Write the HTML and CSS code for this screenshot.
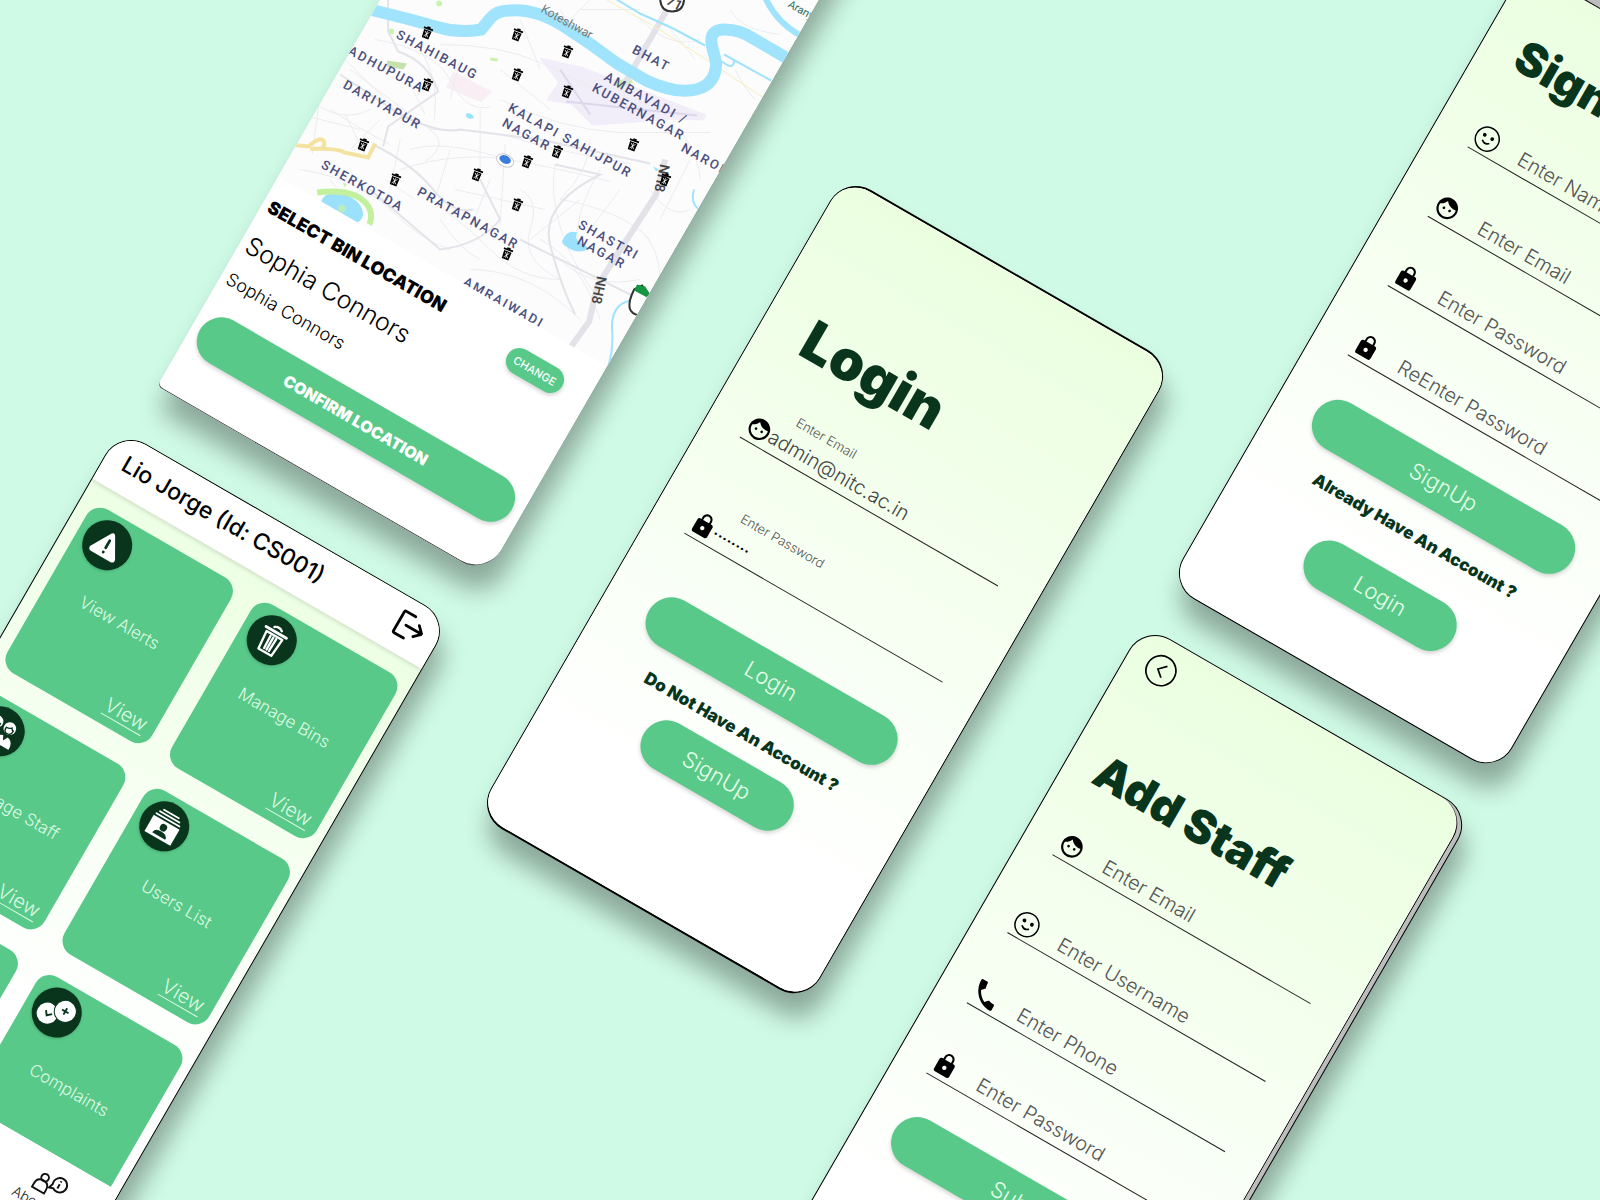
FILE: index.html
```html
<!DOCTYPE html>
<html lang="en">
<head>
<meta charset="utf-8">
<meta name="viewport" content="width=device-width, initial-scale=1">
<title>Waste collection app screens</title>
<link rel="stylesheet" href="styles.css">
</head>
<body>
<svg class="sprite" aria-hidden="true">
  <symbol id="i-face" viewBox="0 0 24 24"><path d="M9 11.75c-.69 0-1.25.56-1.25 1.25s.56 1.25 1.25 1.25 1.25-.56 1.25-1.25-.56-1.25-1.25-1.25zm6 0c-.69 0-1.25.56-1.25 1.25s.56 1.25 1.25 1.25 1.25-.56 1.25-1.25-.56-1.25-1.25-1.25zM12 2C6.48 2 2 6.48 2 12s4.48 10 10 10 10-4.48 10-10S17.52 2 12 2zm0 18c-4.41 0-8-3.59-8-8 0-.29.02-.58.05-.86 2.36-1.05 4.23-2.98 5.21-5.37C11.07 8.33 14.05 10 17.42 10c.78 0 1.53-.09 2.25-.26.21.71.33 1.47.33 2.26 0 4.41-3.59 8-8 8z"/></symbol>
  <symbol id="i-lock" viewBox="0 0 24 24"><path d="M18 8h-1V6c0-2.76-2.24-5-5-5S7 3.24 7 6v2H6c-1.1 0-2 .9-2 2v10c0 1.1.9 2 2 2h12c1.1 0 2-.9 2-2V10c0-1.1-.9-2-2-2zm-6 9c-1.1 0-2-.9-2-2s.9-2 2-2 2 .9 2 2-.9 2-2 2zm3.1-9H8.9V6c0-1.71 1.39-3.1 3.1-3.1 1.71 0 3.1 1.39 3.1 3.1v2z"/></symbol>
  <symbol id="i-smile" viewBox="0 0 26 26"><circle cx="13" cy="13" r="12" fill="none" stroke="#000" stroke-width="1.5"/><circle cx="8.700" cy="10.500" r="1.900"/><circle cx="17.300" cy="10.500" r="1.900"/><path d="M9.500 16.300q3.500 3 7 0" fill="none" stroke="#000" stroke-width="1.700" stroke-linecap="round"/></symbol>
  <symbol id="i-phone" viewBox="0 0 24 24"><path d="M6.620 10.790c1.440 2.830 3.760 5.140 6.590 6.590l2.200-2.200c.27-.27.67-.36 1.020-.24 1.120.37 2.330.57 3.570.57.55 0 1 .45 1 1V20c0 .55-.45 1-1 1-9.390 0-17-7.610-17-17 0-.55.45-1 1-1h3.500c.55 0 1 .45 1 1 0 1.250.2 2.450.57 3.570.11.35.03.74-.25 1.020l-2.200 2.200z"/></symbol>
  <symbol id="i-back" viewBox="0 0 32 32"><g fill="none" stroke="#000" stroke-width="1.700"><circle cx="16" cy="16" r="15"/><path d="M19.500 9 12.500 16l7 6"/></g></symbol>
  <symbol id="i-logout" viewBox="0 0 28 28"><g fill="none" stroke="#000" stroke-width="2.600" stroke-linecap="round" stroke-linejoin="round"><path d="M14 2.500H4q-1.500 0-1.500 1.500v20q0 1.500 1.500 1.500h10"/><path d="M10 14h16M21 8l6 6-6 6"/></g></symbol>
  <symbol id="i-warn" viewBox="0 0 32 32"><path fill="#fff" d="M13.500 4.500q2.500-4 5 0l11.500 20q1.500 4-2.500 4.500h-23q-4-.5-2.500-4.500z"/><path stroke="#08351c" stroke-width="2.800" stroke-linecap="round" d="M16 11v8M16 23.800v.2"/></symbol>
  <symbol id="i-trash" viewBox="0 0 32 32"><g fill="none" stroke="#fff" stroke-width="2.200" stroke-linecap="round" stroke-linejoin="round"><path d="M5 7.500h22" stroke-width="2.800"/><path d="M12 4q4-3 8 0"/><path d="M7.500 11 9 29h14l1.500-18z"/><path d="M13 13l.5 13M16.100 13v13M19.200 13l-.5 13"/></g></symbol>
  <symbol id="i-people" viewBox="0 0 32 32"><g fill="#fff"><circle cx="9" cy="9" r="6"/><path d="M0 27q0-10 9-10 5 0 7 4 2-4 7-4 9 0 9 10z"/><circle cx="23" cy="9" r="6"/></g><path fill="none" stroke="#08351c" stroke-width="1.300" d="M5.500 9.500q3.500 0 5-2 1 2 2.500 2 0 5-4 5t-3.500-5zM19.500 9.500q3.500 0 5-2 1 2 2.500 2 0 5-4 5t-3.500-5z"/><path fill="#08351c" d="m6 16 3 6 3-6zM20 16l3 6 3-6z"/></symbol>
  <symbol id="i-users" viewBox="0 0 32 32"><path stroke="#fff" stroke-width="1.700" stroke-linecap="round" d="M8 2.500h16M5.500 5.700h21M3.500 9h25"/><path fill="#fff" d="M2 11.500h28v17.500h-28z"/><g fill="#08351c"><circle cx="16" cy="17.500" r="3.500"/><path d="M9 26.500q0-5 7-5t7 5z"/></g></symbol>
  <symbol id="i-complaint" viewBox="0 0 36 36"><circle cx="10.500" cy="23" r="10" fill="#fff"/><circle cx="24.500" cy="13" r="10.500" fill="#fff" stroke="#08351c"/><path fill="none" stroke="#08351c" stroke-width="1.800" d="m8 21 3 4 4-3.500M24.500 9.500v7M21 13h7"/></symbol>
  <symbol id="i-about" viewBox="0 0 32 24"><g fill="none" stroke="#111" stroke-width="1.800"><path d="M1.500 22.500v-4q0-6.500 6.500-6.500t6.500 6.500v4z"/><circle cx="8" cy="9" r="3.600"/><path d="M17.200 10.500a6.800 6.800 0 1 1 2.500 3.300l-4 1.400zM23 7.500v4.500M23 4.200v1.300"/></g></symbol>
  <symbol id="i-bin" viewBox="0 0 16 18"><g transform="rotate(20 8 9)"><path d="M2.500 3.500h3.500V2h4v1.500h3.500v2h-11zM3.500 6.500h9l-.5 9.500h-8z"/><path fill="none" stroke="#fff" stroke-width=".8" d="M5.500 8l5 6M10.500 8l-5 6M8 7.500v7"/></g></symbol>
</svg>

<main class="board">

  <section class="phone phone--map">
    <svg class="map" viewBox="1 0 380 496" role="img" aria-label="Map of bin locations">
      <rect width="382" height="496" fill="#fcfcfc"/>
      <g transform="rotate(-30) translate(-525 253)">
        <path class="airport" d="M539 58 581 67 706 115 704 121 671 120 624 124 592 126 571 105 546 101 558 83z"/>
        <path fill="#f9eef3" d="M453 72 492 92 481 103 446 88z"/>
        <path fill="#c5e2ab" d="m387 61 20 3-4 6-16-3z"/>
        <g fill="#c9f3b0"><circle cx="391" cy="32" r="3"/><circle cx="439" cy="4" r="3"/><path d="m490 58 8 1-1 3-7-1zM614 82l16-4 3 5-15 6zM343 183l4 2-3 3z"/></g>
        <g class="lanes">
          <path d="M375 40q60 10 76 42t40 25M350 70q60 45 80 60t-5 32M420 50q20 30 14 70M440 45q60 0 100 18t60 30M430 130q60 0 90 10t110 24M400 170q60-20 120-8t90 20M410 150q30-10 90 8M330 110q30 20 60 35M310 100q30 25 60 10M300 170q60 10 90 40t60 40M440 220q20 30 40 40M430 200q30 20 60 50t70 30M520 190q20 10 10 40t30 50M555 165q-10 60 40 130M480 110v60M500 100q60 30 120 33h90M600 170q-30 50-20 80M560 200q60 10 90 40M650 190q20 30 40 20M640 230q20 20 20 50M540 240q40 20 60 80M470 270q60 0 110 50M330 180q20 30 30 10M560 260q30 30 80 20M670 30q10 10 25 30M640 20q30 30 60 20M560 10q10 20 20 20M580 10h60M730 10q10 20 50 25M735 70q10 20 20 30M680 130q20 30 20 50M590 140q0 30-30 60"/>
          <path d="M300 115 360 130M320 95l-8 60M345 115l20 40M380 120l-30 30M385 180l30 20M360 190l30 15M400 140l-10 50M450 150l-15 50M455 190l90 20M470 230l20-50M500 225l5-80M580 200l-50 40M620 190l-30 40M690 160l-30 60M500 70l50 40M520 20l20 50M590 0l-20 20M460 60l-10 40M405 75l20 40M345 60l50 50"/>
        </g>
        <g class="roads">
          <path d="M388 0v32l10 20q30 10 40 40l-50 35-5 20"/>
          <path d="M340 75l60 40q40 20 60 15l80 10 110 24"/>
          <path d="M373 145q40 20 60 45t40 20M370 190l70 60q40-5 60-30l-20-40"/>
          <path d="M555 165l45 10q-60 30-50 70t25 70M520 240l120 60"/>
        </g>
        <path class="highway" d="M667 10 624 85M665 160l-9 35-39 60-20 32-8 35-18 25"/>
        <path class="yellow thin" d="M606 0l50 28 50 32 60 40"/>
        <path class="yellow" d="M290 145l18 2q14-12 16-4t-14 6q30 0 34 4l24 5 7-14"/>
        <path class="river" d="M366 9 410 20l29 8q20 6 42 2l9-11q6-8 20-8 26-2 54 16t53 37l29 17q30 14 50 9t20-27l-4-16q-4-17 12-17t29 9l36 21"/>
        <path class="river river--mid" d="M762-10q10 30 38 46"/>
        <path class="river river--thin" d="M600-10l40 24 33 15 32 17M724 55l47 26M722 62q12 10 12-2M694 190q-5 15 8 22M640 300q-30 0-28 30t-10 50"/>
        <ellipse cx="342" cy="209" rx="22" ry="14" transform="rotate(24 342 209)" fill="#9be1fb"/>
        <path fill="none" stroke="#c3f09c" stroke-width="6" d="M317 193q40-5 52 15 4 10 0 17"/>
        <circle cx="342" cy="209" r="4" fill="#b6ecc0"/>
        <path fill="#9be1fb" d="M563 240q4-10 14-7-3 8 4 10l8 6q-10 6-20 0t-6-9zM466 114q5-1 8 4-5 3-8-1zM653 167l6 3-3 2z"/>
        <g fill="none" stroke="#dcd8ea" stroke-width="2"><path d="M566 102l131 14M560 70l30 45"/></g>

        <g class="place">
          <text transform="translate(395 38) rotate(28)">SHAHIBAUG</text>
          <text transform="translate(347 54) rotate(28)">ADHUPURA</text>
          <text transform="translate(342 88) rotate(29)">DARIYAPUR</text>
          <text transform="translate(320 168) rotate(29)">SHERKOTDA</text>
          <text transform="translate(416 195) rotate(29)">PRATAPNAGAR</text>
          <text transform="translate(507 111) rotate(29)">KALAPI SAHIJPUR</text>
          <text transform="translate(501 126) rotate(29)">NAGAR</text>
          <text transform="translate(603 80) rotate(29)">AMBAVADI /</text>
          <text transform="translate(591 91) rotate(29)">KUBERNAGAR</text>
          <text transform="translate(631 53) rotate(28)">BHAT</text>
          <text transform="translate(680 151) rotate(29)">NARODA</text>
          <text transform="translate(577 228) rotate(29)">SHASTRI</text>
          <text transform="translate(576 244) rotate(29)">NAGAR</text>
          <text transform="translate(462 285) rotate(29)">AMRAIWADI</text>
        </g>
        <text class="road-name" transform="translate(660 164) rotate(102)">NH8</text>
        <text class="road-name" transform="translate(597 276) rotate(102)">NH8</text>
        <text class="river-name" transform="translate(540 12) rotate(29)">Koteshwar</text>
        <text class="park-name" transform="translate(787 7) rotate(29)">Aranya</text>

        <g fill="#fff" stroke="#333" stroke-width="2"><path d="M660-2q0 14 12 14t12-14z"/><path d="M634 290l8-4 8 10q-2 25-10 20-18-2-6-26z"/></g>
        <path fill="#14953f" d="M634 291l3-6 8 2 5 8-3 3z"/>
        <text class="road-name" transform="translate(665 4) rotate(28)">71</text>

        <ellipse cx="505" cy="161" rx="9" ry="6" transform="rotate(25 505 161)" class="locator"/>
        <ellipse cx="505" cy="160" rx="6" ry="4" transform="rotate(25 505 160)" fill="#3b7ddd"/>

        <g>
          <use href="#i-bin" x="420" y="25" width="14" height="16"/>
          <use href="#i-bin" x="510" y="27" width="14" height="16"/>
          <use href="#i-bin" x="560" y="44" width="14" height="16"/>
          <use href="#i-bin" x="510" y="67" width="14" height="16"/>
          <use href="#i-bin" x="560" y="84" width="14" height="16"/>
          <use href="#i-bin" x="420" y="77" width="14" height="16"/>
          <use href="#i-bin" x="356" y="137" width="14" height="16"/>
          <use href="#i-bin" x="388" y="172" width="14" height="16"/>
          <use href="#i-bin" x="470" y="167" width="14" height="16"/>
          <use href="#i-bin" x="520" y="154" width="14" height="16"/>
          <use href="#i-bin" x="550" y="144" width="14" height="16"/>
          <use href="#i-bin" x="626" y="137" width="14" height="16"/>
          <use href="#i-bin" x="658" y="172" width="14" height="16"/>
          <use href="#i-bin" x="510" y="197" width="14" height="16"/>
          <use href="#i-bin" x="500" y="246" width="14" height="16"/>
        </g>
      </g>
    </svg>
    <div class="pick">
      <div class="pick-info">
        <div>
          <h2 class="pick-title">SELECT BIN LOCATION</h2>
          <p class="pick-name">Sophia Connors</p>
          <p class="pick-sub">Sophia Connors</p>
        </div>
        <button class="btn btn--small" type="button">CHANGE</button>
      </div>
      <button class="btn btn--confirm" type="button">CONFIRM LOCATION</button>
    </div>
  </section>

  <section class="phone phone--dash">
    <header class="topbar">
      <h2 class="topbar-title">Lio Jorge (Id: CS001)</h2>
      <button class="icon-btn" type="button" aria-label="Log out"><svg width="30" height="30"><use href="#i-logout"/></svg></button>
    </header>
    <div class="cards">
      <article class="card"><span class="badge"><svg width="32" height="32"><use href="#i-warn"/></svg></span><h3>View Alerts</h3><a href="#alerts">View</a></article>
      <article class="card"><span class="badge"><svg width="34" height="34"><use href="#i-trash"/></svg></span><h3>Manage Bins</h3><a href="#bins">View</a></article>
      <article class="card"><span class="badge"><svg width="34" height="34"><use href="#i-people"/></svg></span><h3>Manage Staff</h3><a href="#staff">View</a></article>
      <article class="card"><span class="badge"><svg width="34" height="34"><use href="#i-users"/></svg></span><h3>Users List</h3><a href="#users">View</a></article>
      <article class="card"></article>
      <article class="card"><span class="badge"><svg width="38" height="38"><use href="#i-complaint"/></svg></span><h3>Complaints</h3><a href="#complaints">View</a></article>
    </div>
    <nav class="tabs">
      <a class="tab" href="#about"><svg width="34" height="26"><use href="#i-about"/></svg>About Us</a>
    </nav>
  </section>

  <section class="phone phone--login">
    <form class="form form--login">
      <h1 class="title title--large">Login</h1>
      <div class="field field--labelled">
        <label for="login-email">Enter Email</label>
        <svg width="26" height="26"><use href="#i-face"/></svg>
        <input id="login-email" type="email" value="admin@nitc.ac.in">
      </div>
      <div class="field field--labelled">
        <label for="login-pass">Enter Password</label>
        <svg width="26" height="26"><use href="#i-lock"/></svg>
        <input id="login-pass" type="password" value="password">
      </div>
      <button class="btn btn--wide" type="button">Login</button>
      <p class="hint">Do Not Have An Account ?</p>
      <button class="btn btn--half" type="button">SignUp</button>
    </form>
  </section>

  <section class="phone phone--signup">
    <form class="form form--signup">
      <h1 class="title">SignUp</h1>
      <div class="field"><svg width="26" height="26"><use href="#i-smile"/></svg><input type="text" placeholder="Enter Name" aria-label="Enter Name"></div>
      <div class="field"><svg width="26" height="26"><use href="#i-face"/></svg><input type="email" placeholder="Enter Email" aria-label="Enter Email"></div>
      <div class="field"><svg width="26" height="26"><use href="#i-lock"/></svg><input type="password" placeholder="Enter Password" aria-label="Enter Password"></div>
      <div class="field"><svg width="26" height="26"><use href="#i-lock"/></svg><input type="password" placeholder="ReEnter Password" aria-label="ReEnter Password"></div>
      <button class="btn btn--wide" type="button">SignUp</button>
      <p class="hint">Already Have An Account ?</p>
      <button class="btn btn--half" type="button">Login</button>
    </form>
  </section>

  <section class="phone phone--staff">
    <form class="form form--staff">
      <button class="icon-btn" type="button" aria-label="Back"><svg width="32" height="32"><use href="#i-back"/></svg></button>
      <h1 class="title">Add Staff</h1>
      <div class="field"><svg width="26" height="26"><use href="#i-face"/></svg><input type="email" placeholder="Enter Email" aria-label="Enter Email"></div>
      <div class="field"><svg width="26" height="26"><use href="#i-smile"/></svg><input type="text" placeholder="Enter Username" aria-label="Enter Username"></div>
      <div class="field"><svg class="handset" width="32" height="32"><use href="#i-phone"/></svg><input type="tel" placeholder="Enter Phone" aria-label="Enter Phone"></div>
      <div class="field"><svg width="26" height="26"><use href="#i-lock"/></svg><input type="password" placeholder="Enter Password" aria-label="Enter Password"></div>
      <button class="btn btn--wide" type="button">Submit</button>
    </form>
  </section>

</main>
</body>
</html>
```
FILE: styles.css
```css
:root {
  --mint: #cffae5;
  --green: #58c988;
  --dark: #08351c;
  --line: #222;
}

* { box-sizing: border-box; }

body {
  margin: 0;
  background: var(--mint);
  color: #000;
  font-family: Inter, "Liberation Sans", sans-serif;
}

h1, h2, h3, p { margin: 0; }
button, input { font: inherit; color: inherit; }
svg { display: block; flex: none; }
.sprite { position: absolute; width: 0; height: 0; }

/* Free canvas that carries the tilted screens */
.board {
  position: relative;
  min-height: 100vh;
  overflow: hidden;
}

.phone {
  position: absolute;
  display: flex;
  flex-direction: column;
  width: 380px;
  min-height: 738px;
  overflow: hidden;
  border: 1px solid #000;
  border-radius: 30px;
  background: #fff;
  box-shadow: 14px 20px 24px rgba(0, 0, 0, .32);
  transform: rotate(30deg);
  transform-origin: 0 0;
}
.phone--map { left: 526px; top: -253px; border-color: transparent transparent #444; border-width: 0 0 1px; border-radius: 30px 30px 30px 6px; }
.phone--dash { left: 120px; top: 429px; width: 382px; height: 738px; background: linear-gradient(#ebffe1, #fff 75%); }
.phone--login { left: 845px; top: 175px; border-width: 2px 1px; }
.phone--signup { left: 1537px; top: -55px; padding-top: 22px; background: #bdbdbd; }
.phone--staff { left: 1144px; top: 624px; padding-right: 4px; background: #bdbdbd; }

/* Buttons */
.btn {
  height: 52px;
  padding: 0;
  border: 0;
  border-radius: 26px;
  background: var(--green);
  color: #e6ffe9;
  font-size: 22px;
  font-weight: 300;
  box-shadow: 1px 2px 4px rgba(0, 0, 0, .18);
}
.btn--half { width: 169px; }
.btn--small { height: 27px; width: 63px; font-size: 11px; font-weight: 500; color: #fff; }
.btn--confirm { height: 49px; font-size: 16px; font-weight: 900; color: #fff; }
.icon-btn { padding: 0; border: 0; background: none; }

/* Forms */
.form {
  flex: 1;
  display: flex;
  flex-direction: column;
  align-items: center;
  background: linear-gradient(#ebffe0, #fff 85%);
}
.title {
  align-self: flex-start;
  color: var(--dark);
  font-size: 46px;
  font-weight: 900;
  line-height: 52px;
}
.title--large { font-size: 56px; line-height: 60px; }
.field {
  align-self: stretch;
  display: flex;
  align-items: center;
  gap: 24px;
  border-bottom: 1px solid var(--line);
}
.field input {
  flex: 1;
  min-width: 0;
  height: 32px;
  padding: 0;
  border: 0;
  outline: 0;
  background: none;
  color: #444;
  font-size: 20px;
  font-weight: 300;
}
.field input::placeholder { color: #555; opacity: 1; }
.field .handset { margin: 0 -3px; }

.field--labelled {
  display: grid;
  grid-template-columns: 25px 1fr;
  gap: 0;
}
.field--labelled label {
  grid-column: 1 / -1;
  padding-left: 42px;
  color: #555;
  font-size: 13px;
  font-weight: 300;
  line-height: 20px;
}
.field--labelled input[type="password"] { font-size: 9px; color: #000; }

.hint {
  color: var(--dark);
  font-size: 17px;
  font-weight: 900;
  line-height: 20px;
}

.form--login { padding: 127px 41px 0 39px; }
.form--login .title { margin: 0 0 38px 7px; }
.form--login .field + .field { margin-top: 58px; }
.form--login .btn--wide { width: 283px; margin: 58px 0 23px; }
.form--login .btn--half { margin-top: 14px; }

.form--signup { padding: 52px 41px 0 40px; border-top: 1px solid #000; }
.form--signup .title { margin: 0 0 49px -3px; }
.form--signup .field + .field { margin-top: 47px; }
.form--signup .btn--wide { align-self: stretch; margin: 40px 0 21px 1px; }
.form--signup .btn--half { margin-top: 33px; }

.form--staff { padding: 15px 40px 0 35px; border-right: 1px solid #000; border-radius: 30px; }
.form--staff .icon-btn { align-self: flex-start; margin-left: -14px; }
.form--staff .title { margin: 73px 0 40px -4px; }
.form--staff .field + .field { margin-top: 48px; }
.form--staff .title + .field + .field { margin-top: 57px; }
.form--staff .btn--wide { align-self: stretch; margin: 39px 0 0 1px; }

/* Dashboard */
.topbar {
  display: flex;
  align-items: center;
  justify-content: space-between;
  height: 56px;
  padding: 0 16px 4px 19px;
  background: #fff;
  box-shadow: 0 2px 4px rgba(0, 0, 0, .12);
}
.topbar-title { font-size: 23px; font-weight: 500; }
.cards {
  display: grid;
  grid-template-columns: 1fr 1fr;
  grid-auto-rows: 189px;
  gap: 26px 23px;
  height: 604px;
  padding: 19px 10px 0 13px;
  overflow: hidden;
}
.card {
  display: flex;
  flex-direction: column;
  align-items: center;
  padding: 6px 10px 9px 8px;
  border-radius: 16px;
  background: var(--green);
  color: #dcfae4;
}
.card h3 { margin-top: 24px; font-size: 17px; font-weight: 300; line-height: 24px; }
.card a { margin-top: auto; align-self: flex-end; color: inherit; font-size: 20px; font-weight: 300; line-height: 24px; text-underline-offset: 4px; text-decoration-thickness: 1px; }
.badge {
  align-self: flex-start;
  display: grid;
  place-items: center;
  width: 50px;
  height: 50px;
  border-radius: 50%;
  background: var(--dark);
  box-shadow: 0 1px 3px rgba(0, 0, 0, .2);
}
.tabs {
  flex: 1;
  display: flex;
  justify-content: flex-end;
  padding: 15px 33px 0;
  background: #fff;
}
.tab { display: flex; flex-direction: column; align-items: center; gap: 1px; color: #222; font-size: 14px; font-weight: 300; text-decoration: none; }

/* Bin location picker */
.map { width: 100%; height: 496px; }
.airport { fill: #f1edf9; }
.lanes { fill: none; stroke: #ececf0; stroke-width: 1; }
.roads { fill: none; stroke: #e3e3ea; stroke-width: 2; }
.highway { fill: none; stroke: #e2e2e8; stroke-width: 6; }
.yellow { fill: none; stroke: #f4e2a0; stroke-width: 4; }
.yellow.thin { stroke: #f7edbb; stroke-width: 1; }
.river { fill: none; stroke: #9fe3fc; stroke-width: 12; }
.river--mid { stroke-width: 6; }
.river--thin { stroke-width: 2; }
.place { fill: #4c4f7e; font-family: Roboto, sans-serif; font-size: 13px; font-weight: 500; letter-spacing: 2px; }
.road-name { fill: #444; font-family: Roboto, sans-serif; font-size: 14px; font-weight: 500; }
.river-name { fill: #777; font-family: Roboto, sans-serif; font-size: 12px; }
.park-name { fill: #2c6e5c; font-family: Roboto, sans-serif; font-size: 11px; }
.locator { fill: #fff; stroke: #ccc; stroke-width: 1; }

.pick { display: flex; flex-direction: column; padding: 20px 11px 0 7px; }
.pick-info { display: flex; justify-content: space-between; align-items: flex-start; }
.pick-info .btn { margin: 6px 18px 0 0; }
.pick-title { font-size: 18px; font-weight: 900; line-height: 20px; }
.pick-name { margin-top: 15px; font-size: 25px; font-weight: 300; line-height: 36px; }
.pick-sub { margin-top: 10px; font-size: 18px; font-weight: 300; line-height: 24px; }
.btn--confirm { margin: 22px 0 0 2px; }
```
